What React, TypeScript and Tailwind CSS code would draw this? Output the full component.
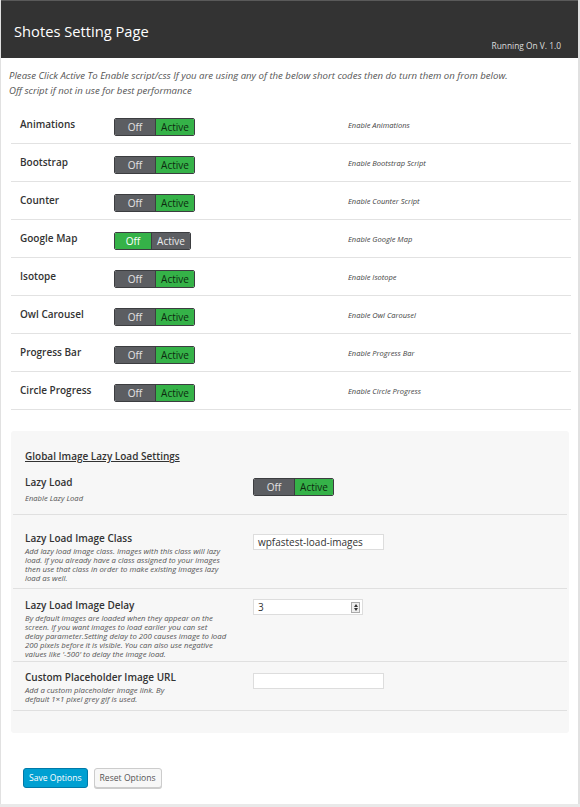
import React from "react";

type Script = { name: string; desc: string; on: boolean };

const scripts: Script[] = [
  { name: "Animations", desc: "Enable Animations", on: true },
  { name: "Bootstrap", desc: "Enable Bootstrap Script", on: true },
  { name: "Counter", desc: "Enable Counter Script", on: true },
  { name: "Google Map", desc: "Enable Google Map", on: false },
  { name: "Isotope", desc: "Enable Isotope", on: true },
  { name: "Owl Carousel", desc: "Enable Owl Carousel", on: true },
  { name: "Progress Bar", desc: "Enable Progress Bar", on: true },
  { name: "Circle Progress", desc: "Enable Circle Progress", on: true },
];

function Toggle({ on }: { on: boolean }) {
  if (!on) {
    return (
      <div className="flex h-[18px] w-[77px] overflow-hidden rounded-[2px] border border-[#3c3d40] text-[10px] leading-none">
        <span className="flex w-[36px] items-center justify-center bg-[#35b248] text-white">Off</span>
        <span className="flex flex-1 items-center justify-center border-l border-[#3c3d40] bg-[#5c5e62] text-[#eee]">Active</span>
      </div>
    );
  }
  return (
    <div className="flex h-[18px] w-[81px] overflow-hidden rounded-[2px] border border-[#3c3d40] text-[10px] leading-none">
      <span className="flex w-[40px] items-center justify-center bg-[#5c5e62] text-[#e4e4e4]">Off</span>
      <span className="flex flex-1 items-center justify-center border-l border-[#3c3d40] bg-[#35b248] text-[#0d2a10]">Active</span>
    </div>
  );
}

function Desc({ lines }: { lines: string[] }) {
  return (
    <div className="mt-[2px] text-[7.8px] italic leading-[9px] text-[#555]">
      {lines.map((l) => (
        <div key={l} className="whitespace-nowrap">{l}</div>
      ))}
    </div>
  );
}

export default function App() {
  return (
    <div className="min-h-[807px] bg-[#e9e9e9] pb-[4px] text-[#222]" style={{ fontFamily: '"Open Sans", "Noto Sans", sans-serif' }}>
      <div className="border-l border-r-2 border-[#e1e1e1] bg-white pb-[16px]">
        {/* header */}
        <div className="flex h-[58px] items-stretch justify-between border-t border-[#5a5a5a] bg-[#333] pl-[13px] pr-[17px] text-white">
          <h1 className="pt-[20px] text-[14.7px] leading-[20px]">Shotes Setting Page</h1>
          <span className="pt-[39px] text-[8.4px] leading-[12px] text-[#ddd]">Running On V. 1.0</span>
        </div>

        <p className="px-[8px] pt-[10px] text-[9.6px] italic leading-[15px] text-[#555]">
          Please Click Active To Enable script/css If you are using any of the below short codes then do turn them on from below.
          <br />
          Off script if not in use for best performance
        </p>

        <div className="ml-[10px] mr-[7px] mt-[8px]">
          {scripts.map((s) => (
            <div key={s.name} className="flex h-[38px] border-b border-[#e2e2e2] pt-[12px]">
              <div className="w-[103px] pl-[9px] text-[10px] font-semibold leading-[13px] text-[#333]">{s.name}</div>
              <div className="w-[234px]">
                <Toggle on={s.on} />
              </div>
              <div className="pt-[2px] text-[7.5px] italic leading-[10px] text-[#444]">{s.desc}</div>
            </div>
          ))}
        </div>

        {/* lazy load box */}
        <div className="ml-[10px] mr-[9px] mt-[21px] rounded-[3px] bg-[#f7f7f7] px-[2px] pb-[22px] pt-[19px]">
          <h3 className="pl-[12px] text-[10px] font-semibold leading-[13px] text-[#333] underline">Global Image Lazy Load Settings</h3>

          <div className="flex h-[52px] border-b border-[#e0e0e0] pt-[13px]">
            <div className="w-[240px] pl-[12px]">
              <div className="text-[10px] font-semibold leading-[13px] text-[#333]">Lazy Load</div>
              <div className="mt-[5px] text-[7.6px] italic leading-[9px] text-[#555]">Enable Lazy Load</div>
            </div>
            <div className="pt-[2px]">
              <Toggle on={true} />
            </div>
          </div>

          <div className="flex h-[74px] border-b border-[#e0e0e0] pt-[17px]">
            <div className="w-[240px] pl-[12px]">
              <div className="text-[10px] font-semibold leading-[13px] text-[#333]">Lazy Load Image Class</div>
              <Desc
                lines={[
                  "Add lazy load image class. Images with this class will lazy",
                  "load. If you already have a class assigned to your images",
                  "then use that class in order to make existing images lazy",
                  "load as well.",
                ]}
              />
            </div>
            <div className="pt-[2px]">
              <div className="flex h-[16px] w-[131px] items-center border border-[#ddd] bg-white px-[4px] text-[10px] text-[#333]">
                wpfastest-load-images
              </div>
            </div>
          </div>

          <div className="flex h-[73px] border-b border-[#e0e0e0] pt-[10px]">
            <div className="w-[240px] pl-[12px]">
              <div className="text-[10px] font-semibold leading-[13px] text-[#333]">Lazy Load Image Delay</div>
              <Desc
                lines={[
                  "By default images are loaded when they appear on the",
                  "screen. If you want images to load earlier you can set",
                  "delay parameter.Setting delay to 200 causes image to load",
                  "200 pixels before it is visible. You can also use negative",
                  "values like '-500' to delay the image load.",
                ]}
              />
            </div>
            <div>
              <div className="flex h-[16px] w-[110px] items-center justify-between border border-[#ddd] bg-white pl-[4px] pr-[2px] text-[10px] text-[#333]">
                <span>3</span>
                <span className="flex h-[11px] w-[9px] flex-col items-center justify-center gap-[1px] border border-[#aaa] bg-[#eee]">
                  <span className="h-0 w-0 border-x-[2.5px] border-b-[3px] border-x-transparent border-b-[#333]" />
                  <span className="h-0 w-0 border-x-[2.5px] border-t-[3px] border-x-transparent border-t-[#333]" />
                </span>
              </div>
            </div>
          </div>

          <div className="flex h-[49px] border-b border-[#e0e0e0] pt-[9px]">
            <div className="w-[240px] pl-[12px]">
              <div className="text-[10px] font-semibold leading-[13px] text-[#333]">Custom Placeholder Image URL</div>
              <Desc lines={["Add a custom placeholder image link. By", "default 1×1 pixel grey gif is used."]} />
            </div>
            <div className="pt-[2px]">
              <div className="h-[16px] w-[131px] border border-[#ddd] bg-white" />
            </div>
          </div>
        </div>

        <div className="mt-[35px] flex gap-[6px] pl-[22px]">
          <button className="h-[20px] rounded-[3px] border border-[#0079a8] bg-[#00a0d2] px-[5px] text-[8.6px] leading-none text-white">
            Save Options
          </button>
          <button className="h-[20px] rounded-[3px] border border-[#ccc] bg-[#f7f7f7] px-[5px] text-[8.6px] leading-none text-[#555] shadow-[0_1px_0_#ccc]">
            Reset Options
          </button>
        </div>
      </div>
    </div>
  );
}
